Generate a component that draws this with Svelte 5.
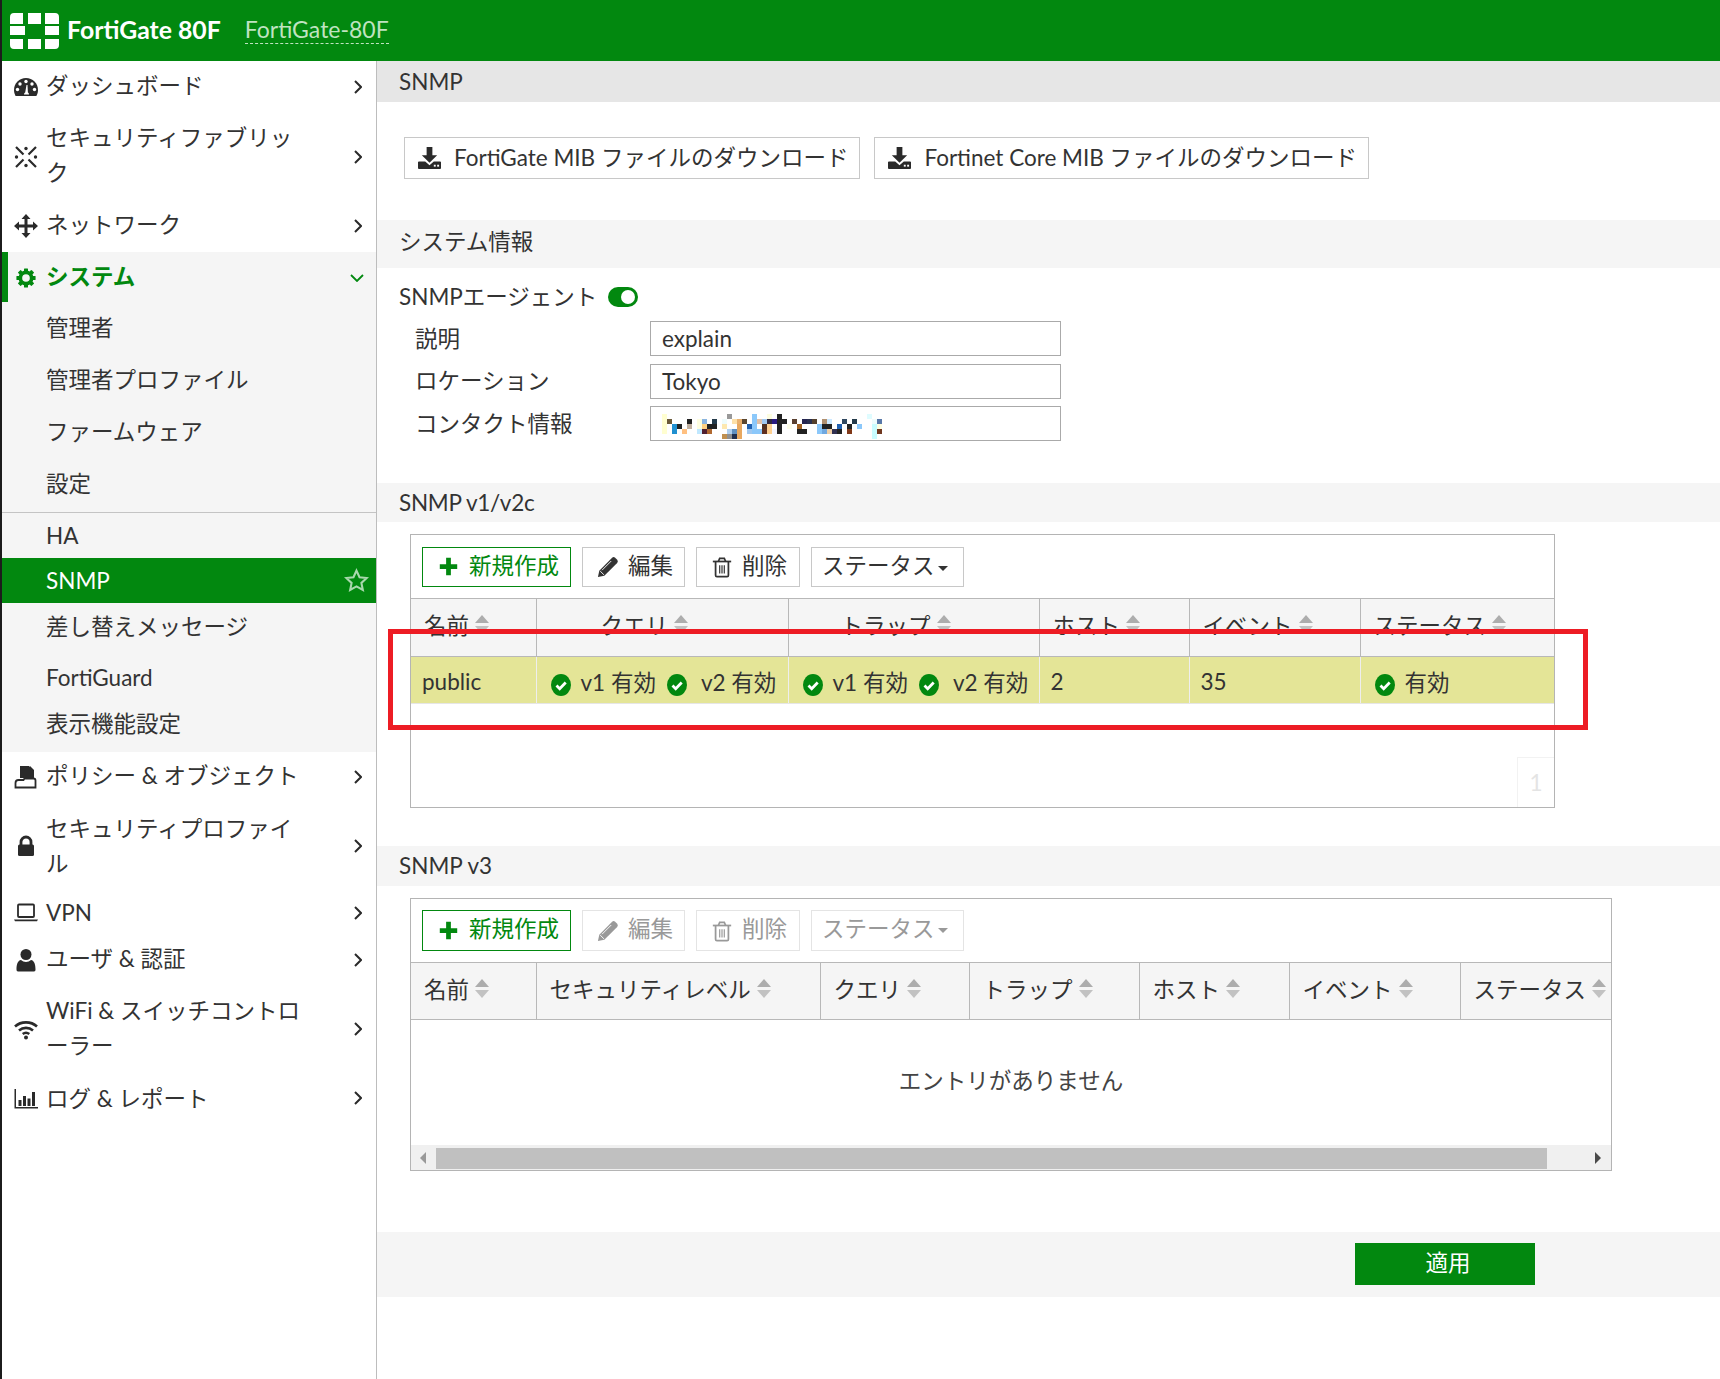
<script>
  const gearTeeth = [0, 45, 90, 135, 180, 225, 270, 315]
    .map((a) => `<rect x="9.6" y="0.5" width="4.8" height="5" rx="0.6" transform="rotate(${a} 12 12)"/>`)
    .join('');

  const icons = {
    dash: `<path d="M12 3C5.4 3 0 8.4 0 15c0 2.200.6 4.200 1.600 6h20.800c1-1.800 1.600-3.800 1.600-6 0-6.600-5.400-12-12-12z"/><g fill="#fff"><circle cx="12" cy="6.500" r="1.700"/><circle cx="6" cy="9" r="1.700"/><circle cx="18" cy="9" r="1.700"/><circle cx="3.500" cy="14.500" r="1.700"/><circle cx="20.500" cy="14.500" r="1.700"/><path d="M10 19.500c0-1 .6-1.700 1.200-2l1.300-7.500h1l.4 7.600c.6.400 1.100 1 1.100 1.900z"/></g>`,
    fabric: `<g stroke="currentColor" stroke-width="2.200" fill="none"><path d="M2 2l7.500 7.500M14.500 14.500L22 22M22 2l-7.500 7.500M9.500 14.500L2 22"/></g><circle cx="12" cy="3.500" r="1.700"/><circle cx="12" cy="20.500" r="1.700"/><circle cx="2.500" cy="12" r="1.700"/><circle cx="21.500" cy="12" r="1.700"/>`,
    move: `<path d="M12 0l4.500 5h-3v5.500H19v-3l5 4.500-5 4.500v-3h-5.500V19h3L12 24l-4.500-5h3v-5.500H5v3L0 12l5-4.500v3h5.500V5h-3z"/>`,
    gear: `${gearTeeth}<circle cx="12" cy="12" r="6.800" fill="none" stroke="currentColor" stroke-width="4.400"/>`,
    policy: `<path d="M6 1h9l1 1v3l4 0v8H6z"/><path d="M16 1l4 4h-4z"/><path d="M1.500 22.500v-4.500c0-1.800 1-3 3-3h5l1-1.500h9c1 0 2 1 2 2v7z" fill="#fff" stroke="currentColor" stroke-width="1.800"/><path d="M6 1h9v9H6z"/>`,
    lock: `<path d="M7 11V8a5 5 0 0 1 10 0v3" fill="none" stroke="currentColor" stroke-width="2.800"/><rect x="4" y="10.500" width="16" height="11.500" rx="1.500"/>`,
    laptop: `<rect x="4" y="3.500" width="16" height="12.500" rx="1" fill="none" stroke="currentColor" stroke-width="1.800"/><path d="M0 18.500h24l-1 1.800H1z"/>`,
    user: `<circle cx="12" cy="6.500" r="5.500"/><path d="M4 23.500c-1 0-1.500-.8-1.500-2 0-5 1.200-9 4.500-9.500 1.400 1.200 3.100 1.900 5 1.900s3.600-.7 5-1.900c3.300.5 4.500 4.500 4.500 9.500 0 1.200-.5 2-1.500 2z"/>`,
    wifi: `<g fill="none" stroke="currentColor" stroke-width="2.600"><path d="M1 9.500c6-5.500 16-5.500 22 0"/><path d="M5 13.500c4-3.500 10-3.500 14 0"/><path d="M8.700 17c2-1.500 4.600-1.500 6.600 0"/></g><circle cx="12" cy="20.500" r="2"/>`,
    chart: `<path d="M0.500 3h1.500v18h22v1.500H0.500z"/><rect x="4.500" y="14" width="3" height="6"/><rect x="9" y="10" width="3" height="10"/><rect x="13.500" y="12.500" width="3" height="7.500"/><rect x="18" y="6" width="3" height="14"/>`,
    plus: `<path d="M9 1h6v8h8v6h-8v8H9v-8H1V9h8z"/>`,
    pencil: `<path d="M1 23l1.500-7L16.500 2a2.400 2.400 0 0 1 3.300 0l2.200 2.200a2.400 2.400 0 0 1 0 3.300L8 21.500z"/><path d="M5.500 15.500L15.500 5.500" stroke="#fff" stroke-width="1"/><path d="M3.500 16.500l4 4" stroke="#fff" stroke-width="1"/>`,
    trash: `<g fill="none" stroke="currentColor" stroke-width="1.900"><path d="M5 6.500V21a1.500 1.500 0 0 0 1.500 1.500h11A1.500 1.500 0 0 0 19 21V6.500"/><path d="M2 6h20"/><path d="M8 6l1.500-3.500h5L16 6"/><path d="M9.500 10v9M12 10v9M14.500 10v9" stroke-width="1.300"/></g>`,
    download: `<path d="M9 0h6v8.500h5l-8 8-8-8h5z"/><path d="M1 15h6.500l4.500 4 4.500-4H23a1 1 0 0 1 1 1v6a1 1 0 0 1-1 1H1a1 1 0 0 1-1-1v-6a1 1 0 0 1 1-1z"/><rect x="16.500" y="18.500" width="2" height="2" fill="#fff"/><rect x="20" y="18.500" width="2" height="2" fill="#fff"/>`
  };

  const nav = [
    { icon: 'dash', label: 'ダッシュボード' },
    { icon: 'fabric', label: 'セキュリティファブリック', cls: 'two' },
    { icon: 'move', label: 'ネットワーク' },
    { icon: 'gear', label: 'システム', open: true },
    { icon: 'policy', label: 'ポリシー & オブジェクト', cls: 'policy' },
    { icon: 'lock', label: 'セキュリティプロファイル', cls: 'two low' },
    { icon: 'laptop', label: 'VPN', cls: 'short low' },
    { icon: 'user', label: 'ユーザ & 認証', cls: 'short' },
    { icon: 'wifi', label: 'WiFi & スイッチコントローラー', cls: 'tall' },
    { icon: 'chart', label: 'ログ & レポート', cls: 'log low' }
  ];

  const subTop = ['管理者', '管理者プロファイル', 'ファームウェア', '設定'];

  const cols1 = [
    { t: '名前', w: 125 },
    { t: 'クエリ', w: 252, pad: 64 },
    { t: 'トラップ', w: 251, pad: 52 },
    { t: 'ホスト', w: 150 },
    { t: 'イベント', w: 171 },
    { t: 'ステータス', w: 194 }
  ];

  const cols2 = [
    { t: '名前', w: 125 },
    { t: 'セキュリティレベル', w: 284 },
    { t: 'クエリ', w: 149 },
    { t: 'トラップ', w: 170 },
    { t: 'ホスト', w: 150 },
    { t: 'イベント', w: 171 },
    { t: 'ステータス', w: 151 }
  ];

  // mosaic over the contact field: [row, col, colour]
  const mosaic = [
    [0, 0, '#fffed0'], [0, 13, '#999'], [0, 18, '#8cc8fa'], [0, 21, '#fdfde0'], [0, 23, '#222'], [0, 41, '#dffcff'],
    [1, 0, '#fffed0'], [1, 1, '#6b5a3a'], [1, 5, '#222'], [1, 7, '#fdfde0'], [1, 8, '#8ab4e0'], [1, 10, '#243a4a'], [1, 12, '#eefcfc'], [1, 14, '#fde0a8'], [1, 15, '#e8b070'], [1, 16, '#5a4630'], [1, 18, '#8cc8fa'], [1, 19, '#e0c0a8'], [1, 20, '#a0c8f0'], [1, 21, '#302840'], [1, 22, '#2a1a80'], [1, 23, '#222'], [1, 24, '#222'], [1, 26, '#5a4030'], [1, 28, '#252550'], [1, 29, '#2a3050'], [1, 30, '#54402c'], [1, 32, '#b09070'], [1, 33, '#cce8ff'], [1, 36, '#304860'], [1, 38, '#243a4a'], [1, 42, '#eefcfc'], [1, 43, '#5878a8'],
    [2, 0, '#fffed0'], [2, 2, '#2090d0'], [2, 3, '#222'], [2, 5, '#c0b0a0'], [2, 7, '#fdfde0'], [2, 8, '#ffd080'], [2, 9, '#222'], [2, 10, '#222'], [2, 12, '#fde8b0'], [2, 15, '#e8a860'], [2, 17, '#2060b0'], [2, 18, '#8cc8fa'], [2, 20, '#503020'], [2, 21, '#ffd090'], [2, 23, '#222'], [2, 25, '#fdfde8'], [2, 27, '#a06020'], [2, 31, '#8cc8fa'], [2, 32, '#222'], [2, 33, '#222'], [2, 35, '#2060b0'], [2, 37, '#222'], [2, 39, '#8cc8fa'], [2, 42, '#c8fcff'], [2, 43, '#fdfde0'],
    [3, 0, '#fffed0'], [3, 2, '#2090d0'], [3, 4, '#ffc080'], [3, 7, '#c0e8ff'], [3, 8, '#502030'], [3, 9, '#b06830'], [3, 13, '#b0d0f0'], [3, 14, '#6090c0'], [3, 15, '#e8a860'], [3, 17, '#a0c8f0'], [3, 18, '#8cc8fa'], [3, 19, '#8cc8fa'], [3, 20, '#603020'], [3, 21, '#ffd090'], [3, 22, '#f6f6ff'], [3, 23, '#222'], [3, 27, '#222'], [3, 28, '#222'], [3, 31, '#8cc8fa'], [3, 32, '#70a8e0'], [3, 33, '#f0d0a8'], [3, 34, '#303050'], [3, 35, '#222'], [3, 37, '#803818'], [3, 42, '#c8fcff'], [3, 43, '#703820'],
    [4, 12, '#c09050'], [4, 13, '#909090'], [4, 14, '#203050'], [4, 15, '#e8a860'], [4, 42, '#c8fcff']
  ];
</script>

{#snippet icon(name, cls)}
  <svg class={cls} viewBox="0 0 24 24" fill="currentColor">{@html icons[name]}</svg>
{/snippet}

{#snippet sortCaret()}
  <svg class="caret" viewBox="0 0 16 20"><path d="M8 1l7 8H1z" fill="#adadad" /><path d="M1 12h14l-7 8z" fill="#c2c2c2" /></svg>
{/snippet}

{#snippet check()}
  <svg class="check" viewBox="0 0 20 22"><ellipse cx="10" cy="11" rx="10" ry="11" fill="#02880f" /><path d="M5.500 11.500l3.200 3.200 6-6.200" fill="none" stroke="#fff" stroke-width="2.800" /></svg>
{/snippet}

{#snippet toolbar(disabled)}
  <div class="toolbar">
    <button class="btn create">{@render icon('plus', 'ic-plus')}新規作成</button>
    <button class="btn act edit" class:off={disabled}>{@render icon('pencil', 'ic-btn')}編集</button>
    <button class="btn act del" class:off={disabled}>{@render icon('trash', 'ic-btn')}削除</button>
    <button class="btn status" class:off={disabled}>ステータス<span class="drop"></span></button>
  </div>
{/snippet}

{#snippet head(cols)}
  <colgroup>
    {#each cols as c}<col style="width:{c.w}px" />{/each}
  </colgroup>
  <thead>
    <tr>
      {#each cols as c}
        <th style="padding-left:{c.pad ?? 13}px">{c.t}{@render sortCaret()}</th>
      {/each}
    </tr>
  </thead>
{/snippet}

<div class="page">
  <header class="topbar">
    <svg class="logo" viewBox="0 0 49 36" fill="#fff">
      <path d="M0 11V4a4 4 0 0 1 4-4h9v11zM18 0h13v11H18zM35 0h10a4 4 0 0 1 4 4v7H35z" />
      <path d="M0 13h15v9H0zM35 13h14v9H35z" />
      <path d="M0 26h13v10H4a4 4 0 0 1-4-4zM18 26h13v10H18zM35 26h14v6a4 4 0 0 1-4 4H35z" />
    </svg>
    <span class="model">FortiGate 80F</span>
    <span class="host">FortiGate-80F</span>
  </header>

  <div class="body">
    <nav class="sidebar">
      {#each nav as item}
        <div class="row {item.cls ?? ''}" class:active={item.open}>
          {@render icon(item.icon, 'ic-nav')}
          <span class="label">{item.label}</span>
          {#if item.open}
            <svg class="chev-down" viewBox="0 0 14 8"><path d="M1 1l6 6 6-6" fill="none" stroke="currentColor" stroke-width="1.800" /></svg>
          {:else}
            <svg class="chev" viewBox="0 0 8 14"><path d="M1 1l6 6-6 6" fill="none" stroke="currentColor" stroke-width="2" /></svg>
          {/if}
        </div>
        {#if item.open}
          <div class="submenu">
            <div class="sub-group">
              {#each subTop as s}<div class="sub">{s}</div>{/each}
            </div>
            <div class="sub ha">HA</div>
            <div class="sub current">
              SNMP
              <svg class="star" viewBox="0 0 24 24"><path d="M12 2.500l2.900 6.300 6.900.8-5.100 4.700 1.400 6.800-6.100-3.400-6.100 3.400 1.400-6.800-5.100-4.700 6.900-.8z" fill="none" stroke="currentColor" stroke-width="2" /></svg>
            </div>
            <div class="sub msg">差し替えメッセージ</div>
            <div class="sub guard">FortiGuard</div>
            <div class="sub feat">表示機能設定</div>
          </div>
        {/if}
      {/each}
    </nav>

    <main class="main">
      <div class="title">SNMP</div>

      <div class="downloads">
        <button class="btn dl">{@render icon('download', 'ic-dl')}FortiGate MIB ファイルのダウンロード</button>
        <button class="btn dl">{@render icon('download', 'ic-dl')}Fortinet Core MIB ファイルのダウンロード</button>
      </div>

      <div class="section info">システム情報</div>
      <div class="agent"><span class="agent-label">SNMPエージェント</span><span class="toggle"></span></div>
      <div class="form">
        <div class="field"><span class="field-label">説明</span><div class="input">explain</div></div>
        <div class="field"><span class="field-label">ロケーション</span><div class="input">Tokyo</div></div>
        <div class="field">
          <span class="field-label">コンタクト情報</span>
          <div class="input">
            <svg class="mosaic" viewBox="0 0 220 25">
              {#each mosaic as [r, c, color]}
                <rect x={c * 5} y={r * 5} width="5" height="5" fill={color} />
              {/each}
            </svg>
          </div>
        </div>
      </div>

      <div class="section v2">SNMP v1/v2c</div>
      <div class="panel p1">
        {@render toolbar(false)}
        <table>
          {@render head(cols1)}
          <tbody>
            <tr class="selected">
              <td>public</td>
              <td class="stat">{@render check()}<span class="v1">v1 有効</span>{@render check()}<span>v2 有効</span></td>
              <td class="stat">{@render check()}<span class="v1">v1 有効</span>{@render check()}<span>v2 有効</span></td>
              <td>2</td>
              <td>35</td>
              <td class="stat solo">{@render check()}<span>有効</span></td>
            </tr>
          </tbody>
        </table>
        <div class="pager">1</div>
      </div>

      <div class="section v3">SNMP v3</div>
      <div class="panel p2">
        {@render toolbar(true)}
        <table>
          {@render head(cols2)}
        </table>
        <div class="empty">エントリがありません</div>
        <div class="scrollbar">
          <span class="arrow left"></span>
          <span class="thumb"></span>
          <span class="arrow right"></span>
        </div>
      </div>

      <div class="footer"><button class="apply">適用</button></div>
    </main>
  </div>

  <div class="redbox"></div>
</div>

<style>
  :global(body) {
    margin: 0;
    background: #fff;
  }

  .page {
    position: relative;
    min-height: 1379px;
    border-left: 2px solid #1c1c1c;
    box-sizing: border-box;
    font-family: Lato, "Noto Sans CJK JP", sans-serif;
    font-size: 22.5px;
    font-weight: 400;
    color: #333;
  }

  .topbar {
    display: flex;
    align-items: center;
    height: 61px;
    padding-bottom: 2px;
    box-sizing: border-box;
    background: #02880f;
    color: #fff;
  }

  .logo {
    width: 49px;
    height: 36px;
    margin-left: 8px;
    margin-top: 3px;
  }

  .model {
    margin-left: 8px;
    font-size: 24.800px;
    font-weight: 700;
  }

  .host {
    margin-left: 24px;
    font-size: 23px;
    color: #bfe3c0;
    border-bottom: 1px dashed #bfe3c0;
    line-height: 28px;
  }

  .body {
    display: flex;
    min-height: 1318px;
  }

  .sidebar {
    width: 375px;
    flex-shrink: 0;
    box-sizing: border-box;
    border-right: 1px solid #bdbdbd;
  }

  .row {
    display: flex;
    align-items: center;
    height: 52px;
    box-sizing: border-box;
    padding-left: 12px;
    line-height: 35px;
  }

  .row.two {
    height: 87px;
  }

  .row.tall {
    height: 90px;
  }

  .row.short {
    height: 47.500px;
  }

  .row.policy {
    height: 50px;
  }

  .row.log {
    height: 48px;
  }

  .row.active {
    height: 52px;
    background: #f5f5f5;
    border-left: 6px solid #02880f;
    padding-left: 8px;
    color: #02880f;
    font-weight: 700;
  }

  .ic-nav {
    width: 24px;
    height: 24px;
    flex-shrink: 0;
    color: #2a2a2a;
  }

  .row.active .ic-nav {
    width: 20px;
    height: 20px;
    color: #02880f;
  }

  .label {
    width: 258px;
    margin-left: 8px;
    margin-bottom: 3px;
    line-break: anywhere;
  }

  .row.low .label {
    margin-bottom: 0;
  }

  .row.active .label {
    margin-left: 10px;
  }

  .chev {
    width: 8px;
    height: 14px;
    margin-left: 50px;
    color: #2a2a2a;
  }

  .chev-down {
    width: 14px;
    height: 8px;
    margin-left: 46px;
  }

  .submenu {
    background: #f5f5f5;
  }

  .sub-group {
    border-bottom: 1px solid #c4c4c4;
    padding-bottom: 2px;
    margin-top: -2px;
  }

  .sub {
    display: flex;
    align-items: center;
    height: 52px;
    box-sizing: border-box;
    padding-left: 44px;
    padding-bottom: 4px;
  }

  .sub.ha {
    height: 45px;
    padding-bottom: 0;
  }

  .sub.current {
    justify-content: space-between;
    height: 45px;
    padding-right: 7px;
    padding-bottom: 0;
    background: #02880f;
    color: #fff;
  }

  .star {
    width: 25px;
    height: 25px;
    color: #a9d8ad;
  }

  .sub.msg {
    height: 48px;
  }

  .sub.guard {
    height: 52px;
    padding-bottom: 0;
  }

  .sub.feat {
    height: 49px;
    padding-bottom: 11px;
  }

  .main {
    flex: 1;
    min-width: 0;
  }

  .title {
    height: 41px;
    padding-left: 22px;
    line-height: 41px;
    background: #e6e6e6;
  }

  .downloads {
    display: flex;
    gap: 14px;
    margin: 35px 0 0 27px;
  }

  .btn {
    display: flex;
    align-items: center;
    height: 40px;
    box-sizing: border-box;
    padding: 0 11px 6px 15px;
    border: 1px solid #c8c8c8;
    background: #fff;
    color: #333;
    font: inherit;
  }

  .btn.dl {
    height: 42px;
    padding: 0 11px 4px 13px;
  }

  .ic-dl {
    width: 23px;
    height: 23px;
    margin-right: 13px;
    margin-top: 4px;
    color: #2a2a2a;
  }

  .section {
    height: 48px;
    padding-left: 22px;
    line-height: 44px;
    background: #f5f5f5;
  }

  .section.info {
    margin-top: 41px;
  }

  .section.v2 {
    height: 39px;
    margin-top: 42px;
    line-height: 39px;
    letter-spacing: -0.3px;
  }

  .section.v3 {
    height: 40px;
    margin-top: 38px;
    line-height: 40px;
  }

  .agent {
    display: flex;
    align-items: center;
    height: 30px;
    margin-top: 14px;
    padding-left: 22px;
  }

  .agent-label {
    margin-bottom: 4px;
  }

  .toggle {
    position: relative;
    width: 30px;
    height: 20px;
    margin-left: 11px;
    border-radius: 10px;
    background: #02880f;
  }

  .toggle::after {
    content: "";
    position: absolute;
    top: 3px;
    right: 3px;
    width: 14px;
    height: 14px;
    border-radius: 50%;
    background: #fff;
  }

  .form {
    display: flex;
    flex-direction: column;
    gap: 7.500px;
    margin: 9px 0 0 38px;
  }

  .field {
    display: flex;
    align-items: center;
    height: 35px;
  }

  .field-label {
    width: 235px;
    margin-bottom: 4px;
  }

  .input {
    display: flex;
    align-items: center;
    width: 411px;
    height: 35px;
    box-sizing: border-box;
    padding-left: 11px;
    border: 1px solid #aaa;
  }

  .mosaic {
    display: block;
    width: 220px;
    height: 25px;
    margin-top: 6px;
  }

  .panel {
    display: flex;
    flex-direction: column;
    box-sizing: border-box;
    margin: 12px 0 0 33px;
    border: 1px solid #b4b4b4;
  }

  .panel.p1 {
    width: 1145px;
    height: 274px;
  }

  .panel.p2 {
    width: 1202px;
    height: 273px;
  }

  .toolbar {
    display: flex;
    gap: 11px;
    height: 63px;
    padding: 12px 0 0 11px;
    box-sizing: border-box;
  }

  .p2 .toolbar {
    padding-top: 11px;
  }

  .p2 .btn {
    height: 41px;
    padding-bottom: 8px;
  }

  .btn.create {
    width: 149px;
    padding-left: 16px;
    border-color: #02880f;
    color: #02880f;
  }

  .ic-plus {
    width: 19px;
    height: 19px;
    margin-right: 11px;
    margin-top: 5px;
    flex-shrink: 0;
  }

  .btn.act {
    padding-left: 14px;
    padding-right: 0;
  }

  .btn.edit {
    width: 103px;
  }

  .btn.del {
    width: 104px;
  }

  .ic-btn {
    width: 22px;
    height: 22px;
    margin-right: 9px;
    margin-top: 6px;
    flex-shrink: 0;
  }

  .p2 .ic-plus,
  .p2 .ic-btn {
    margin-top: 8px;
  }

  .btn.status {
    width: 153px;
    padding-left: 10px;
    padding-right: 0;
  }

  .drop {
    width: 0;
    height: 0;
    margin-left: 3px;
    margin-top: 8px;
    border: 5.500px solid transparent;
    border-top: 5.500px solid #333;
    border-bottom: 0;
  }

  .btn.off {
    border-color: #e4e4e4;
    color: #999;
  }

  .btn.off .drop {
    border-top-color: #999;
  }

  table {
    width: 100%;
    table-layout: fixed;
    border-collapse: collapse;
  }

  th {
    height: 58px;
    box-sizing: border-box;
    padding: 0 0 8px 13px;
    background: #f5f5f5;
    border: 1px solid #b8b8b8;
    border-left: 0;
    font-weight: 400;
    text-align: left;
    white-space: nowrap;
  }

  .p2 th {
    height: 57px;
    padding-bottom: 6px;
  }

  th:last-child {
    border-right: 0;
  }

  .caret {
    width: 16px;
    height: 20px;
    margin-left: 5px;
    vertical-align: 0;
  }

  td {
    height: 47px;
    box-sizing: border-box;
    padding: 3px 0 0 11px;
    border-right: 1px solid #eee;
    border-bottom: 1px solid #e6e6e6;
    white-space: nowrap;
  }

  td:last-child {
    border-right: 0;
  }

  .selected td {
    background: #e4e597;
  }

  td.stat {
    padding: 1px 0 0 14px;
  }

  .check {
    width: 20px;
    height: 22px;
    margin-right: 10px;
    vertical-align: -5px;
  }

  .v1 {
    margin-right: 11px;
  }

  td.stat .check + .v1 + .check {
    margin-right: 14px;
  }

  .pager {
    align-self: flex-end;
    width: 37px;
    height: 50px;
    margin-top: auto;
    box-sizing: border-box;
    border: 1px solid #f2f2f2;
    border-right: 0;
    border-bottom: 0;
    color: #e4e4e4;
    text-align: center;
    line-height: 50px;
  }

  .empty {
    height: 126px;
    line-height: 122px;
    text-align: center;
    color: #444;
  }

  .scrollbar {
    display: flex;
    align-items: center;
    height: 25px;
    padding-top: 1px;
    box-sizing: border-box;
    background: #f0f0f0;
  }

  .arrow {
    width: 0;
    height: 0;
    border: 6px solid transparent;
  }

  .arrow.left {
    margin-left: 9px;
    border-right: 6px solid #999;
    border-left: 0;
  }

  .arrow.right {
    margin-left: 48px;
    border-left: 6px solid #4a4a4a;
    border-right: 0;
  }

  .thumb {
    width: 1111px;
    height: 21px;
    margin-left: 10px;
    background: #c0c0c0;
  }

  .footer {
    display: flex;
    justify-content: flex-end;
    height: 65px;
    margin-top: 61px;
    padding: 11px 185px 0 0;
    box-sizing: border-box;
    background: #f5f5f5;
  }

  .apply {
    width: 180px;
    height: 42px;
    padding: 0 0 6px 6px;
    border: 0;
    background: #02880f;
    color: #fff;
    font: inherit;
  }

  .redbox {
    position: absolute;
    left: 386px;
    top: 629px;
    width: 1200px;
    height: 101px;
    box-sizing: border-box;
    border: 5px solid #ed1c24;
  }
</style>
